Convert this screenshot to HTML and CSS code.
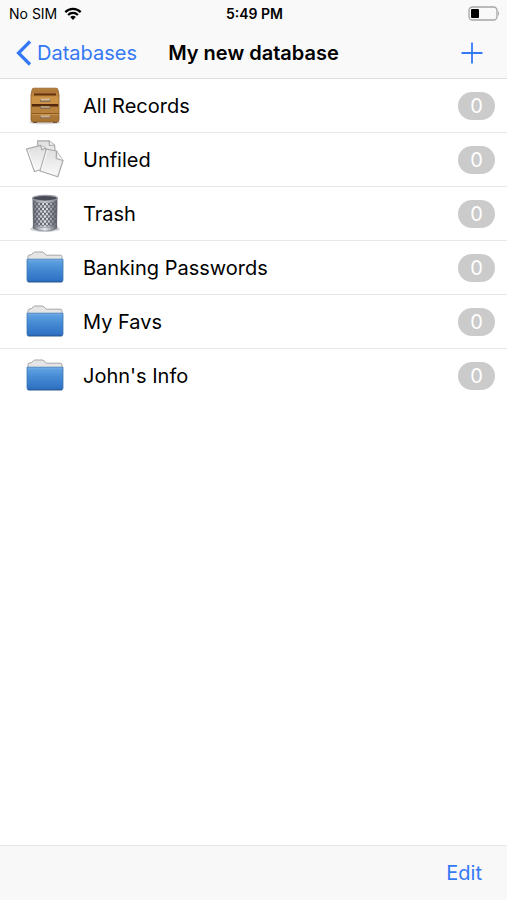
FILE: index.html
```
<!DOCTYPE html>
<html lang="en">
<head>
  <meta charset="UTF-8">
  <meta name="viewport" content="width=device-width, initial-scale=1.0">
  <title>My new database</title>
  <link rel="stylesheet" href="styles.css">
</head>
<body>
  <!-- Shared icon artwork -->
  <svg class="defs" width="0" height="0" aria-hidden="true">
    <defs>
      <linearGradient id="blue" x1="0" y1="0" x2="0" y2="1">
        <stop offset="0" stop-color="#65a5e3"/>
        <stop offset="0.4" stop-color="#478cd5"/>
        <stop offset="1" stop-color="#2c6fc2"/>
      </linearGradient>
      <linearGradient id="wood" x1="0" y1="0" x2="0" y2="1">
        <stop offset="0" stop-color="#c08a42"/>
        <stop offset="1" stop-color="#a87232"/>
      </linearGradient>
      <linearGradient id="paper" x1="0" y1="0" x2="0" y2="1">
        <stop offset="0" stop-color="#dedede"/>
        <stop offset="1" stop-color="#fafafa"/>
      </linearGradient>
      <linearGradient id="steel" x1="0" y1="0" x2="1" y2="0">
        <stop offset="0" stop-color="#62656e"/>
        <stop offset="0.25" stop-color="#b6b9c1"/>
        <stop offset="0.5" stop-color="#e8e9ed"/>
        <stop offset="0.75" stop-color="#a5a8b1"/>
        <stop offset="1" stop-color="#5a5d66"/>
      </linearGradient>
      <pattern id="mesh" width="4" height="5" patternUnits="userSpaceOnUse">
        <path d="M0 0L4 5M4 0L0 5" stroke="#585b66" stroke-width="1" fill="none"/>
      </pattern>
    </defs>
    <symbol id="folder" viewBox="0 0 40 40">
      <path d="M3 34V8.5Q3 7.5 4 7.2L6.5 6.5L8.5 4.6Q9.2 4 10.2 4H17Q18 4 18.8 4.7L21.5 7.2H35.5Q37 7.2 37 8.8V34Z" fill="#e5e5e5" stroke="#a5a5a5"/>
      <path d="M2 11.2H38V32Q38 34 36 34H4Q2 34 2 32Z" fill="url(#blue)" stroke="#3c76b5" stroke-width="0.8"/>
      <path d="M2.6 12.3H37.4" stroke="#6ea9e4"/>
      <path d="M3 33.4H37" stroke="#285f9f"/>
    </symbol>
  </svg>

  <div class="screen">
    <header class="header">
      <div class="status">
        <div class="carrier">
          <span>No SIM</span>
          <svg width="18" height="14" viewBox="0 0 18 14" aria-hidden="true">
            <path d="M1.3 5.1C5.6 0.8 12.4 0.8 16.7 5.1M4.1 8C6.8 5.2 11.2 5.2 13.9 8" fill="none" stroke="#000" stroke-width="2.2"/>
            <path d="M6.2 10.1Q9 7.4 11.8 10.1L9 13Z"/>
          </svg>
        </div>
        <span class="time">5:49 PM</span>
        <svg class="battery" width="32" height="15" viewBox="0 0 32 15" aria-hidden="true">
          <rect x="1" y="1" width="28" height="13" rx="3.5" fill="none" stroke="#a5a5a5" stroke-width="1.3"/>
          <rect x="3" y="3" width="8" height="9" rx="1" fill="#000"/>
          <path d="M30 5Q32 7.5 30 10Z" fill="#a5a5a5"/>
        </svg>
      </div>
      <nav class="nav">
        <a class="back" href="#databases">
          <svg width="16" height="26" viewBox="0 0 16 26" aria-hidden="true">
            <path d="M14 1.5L2.5 13L14 24.5" fill="none" stroke="currentColor" stroke-width="3.2"/>
          </svg>
          Databases
        </a>
        <h1>My new database</h1>
        <button class="add" type="button" aria-label="Add">
          <svg width="22" height="22" viewBox="0 0 22 22" aria-hidden="true">
            <path d="M11 0.5V21.5M0.5 11H21.5" stroke="currentColor" stroke-width="1.8"/>
          </svg>
        </button>
      </nav>
    </header>

    <main class="content">
      <ul class="list">
        <li><a class="row" href="#all">
          <svg class="icon" viewBox="0 0 40 40" aria-hidden="true">
            <ellipse cx="20" cy="36.5" rx="16" ry="1.8" fill="#d5d5d5"/>
            <path d="M8 35H12V37H8ZM28 35H32V37H28Z" fill="#5e554b"/>
            <path d="M7 4Q7 2.2 9 2.2H31Q33 2.2 33 4L34 9V34Q34 36 32 36H8Q6 36 6 34V9Z" fill="url(#wood)" stroke="#8b5922" stroke-width="0.8"/>
            <path d="M8 3.5H32L33 7H7Z" fill="#b0793a"/>
            <path d="M9 7.4H31V9.5H9Z" fill="#65340f"/>
            <path d="M6.5 10.5H33.5V18H6.5Z" fill="#cc9347"/>
            <path d="M7 18H33V20.5H7Z" fill="#55290b"/>
            <path d="M6.5 21H33.5V27H6.5Z" fill="#b9833e"/>
            <path d="M6.5 27.5H33.5" stroke="#8c5720"/>
            <path d="M6.5 28.6H33.5" stroke="#c99750"/>
            <path d="M15.5 13V15.5H25V13M15.5 20V22.5H25V20M15.5 30V32H25V30" fill="#b39874" stroke="#806951" stroke-width="0.9"/>
            <path d="M15.5 13.2H25M15.5 30H25" stroke="#e6d8b9" stroke-width="0.8"/>
          </svg>
          <span class="name">All Records</span><span class="count">0</span>
        </a></li>
        <li><a class="row" href="#unfiled">
          <svg class="icon" viewBox="0 0 40 40" fill="url(#paper)" stroke="#a9a9a9" stroke-width="1.2" stroke-linejoin="round" aria-hidden="true">
            <path d="M12.5 0.8H24L29.5 5L30.5 15L14 19Z"/>
            <path d="M24 0.8L24.5 5.5L29.5 5"/>
            <path d="M1.5 9L15.5 5.3L20.5 7.8L25 27L9.5 31.5Z"/>
            <path d="M15.5 5.3L17 10L20.5 7.8"/>
            <path d="M21.5 9L31.5 11L38 20.5L32.8 36.8L15 31Z"/>
            <path d="M31.5 11L31.2 18.5L38 20.5"/>
            <path d="M3 10.3L10.2 30M22.3 10.3L16.2 30.2" stroke="#fff" stroke-width="0.8" fill="none"/>
          </svg>
          <span class="name">Unfiled</span><span class="count">0</span>
        </a></li>
        <li><a class="row" href="#trash">
          <svg class="icon" viewBox="0 0 40 40" aria-hidden="true">
            <ellipse cx="20" cy="35" rx="15" ry="3" fill="#d4d4d6"/>
            <path d="M7.5 4L8 34Q14 38 20 38T32 34L32.5 4Z" fill="url(#steel)"/>
            <path d="M8 7Q20 10 32 7L31.5 31Q20 34 8.5 31Z" fill="url(#mesh)"/>
            <path d="M8 31.5Q20 35.5 32 31.5V34.5Q20 39.5 8 34.5Z" fill="url(#steel)" stroke="#6d7079" stroke-width="0.5"/>
            <ellipse cx="20" cy="4.2" rx="12.5" ry="2.8" fill="#494c56" stroke="#9a9da5" stroke-width="1.2"/>
          </svg>
          <span class="name">Trash</span><span class="count">0</span>
        </a></li>
        <li><a class="row" href="#banking">
          <svg class="icon" aria-hidden="true"><use href="#folder"/></svg>
          <span class="name">Banking Passwords</span><span class="count">0</span>
        </a></li>
        <li><a class="row" href="#favs">
          <svg class="icon" aria-hidden="true"><use href="#folder"/></svg>
          <span class="name">My Favs</span><span class="count">0</span>
        </a></li>
        <li><a class="row" href="#john">
          <svg class="icon" aria-hidden="true"><use href="#folder"/></svg>
          <span class="name">John's Info</span><span class="count">0</span>
        </a></li>
      </ul>
    </main>

    <footer class="toolbar">
      <button class="edit" type="button">Edit</button>
    </footer>
  </div>
</body>
</html>
```
FILE: styles.css
```
* {
  box-sizing: border-box;
}

body {
  margin: 0;
  font-family: Inter, "Liberation Sans", sans-serif;
  font-size: 20px;
  line-height: 24px;
  color: #000;
  background-color: #fff;
}

a {
  color: inherit;
  text-decoration: none;
}

button {
  padding: 0;
  border: none;
  background: none;
  font: inherit;
  color: #3478f6;
  cursor: pointer;
}

svg {
  display: block;
  flex-shrink: 0;
}

.defs {
  position: absolute;
}

.screen {
  display: flex;
  flex-direction: column;
  min-height: 100vh;
}

/* Status bar and navigation */
.header {
  background-color: #f9f9f9;
  border-bottom: 1px solid #dfdfdf;
}

.status,
.nav {
  display: grid;
  grid-template-columns: 1fr auto 1fr;
  align-items: center;
}

.status {
  height: 27px;
  padding: 0 7px 0 9px;
  font-size: 14px;
}

.carrier {
  display: flex;
  align-items: center;
  gap: 7px;
}

.time {
  font-weight: 600;
}

.battery {
  justify-self: end;
}

.nav {
  height: 51px;
  padding: 0 16px;
}

.back {
  display: flex;
  align-items: center;
  gap: 5px;
  color: #3478f6;
}

.nav h1 {
  margin: 0;
  font-size: 20px;
  font-weight: 600;
}

.add {
  justify-self: end;
  margin-right: 8px;
}

/* Record groups */
.content {
  flex: 1;
}

.list {
  margin: 0;
  padding: 0;
  list-style: none;
}

.row {
  display: flex;
  align-items: center;
  height: 54px;
  padding: 0 12px 0 25px;
  border-bottom: 1px solid #e8e8e8;
}

.list li:last-child .row {
  border-bottom: none;
}

.icon {
  width: 40px;
  height: 40px;
  margin-right: 18px;
}

.name {
  flex: 1;
}

.count {
  width: 37px;
  border-radius: 14px;
  line-height: 28px;
  text-align: center;
  color: #fff;
  background-color: #cbcbcb;
}

.toolbar {
  display: flex;
  justify-content: flex-end;
  align-items: center;
  height: 55px;
  padding: 0 25px;
  border-top: 1px solid #e8e8e8;
  background-color: #f8f8f8;
}
```
